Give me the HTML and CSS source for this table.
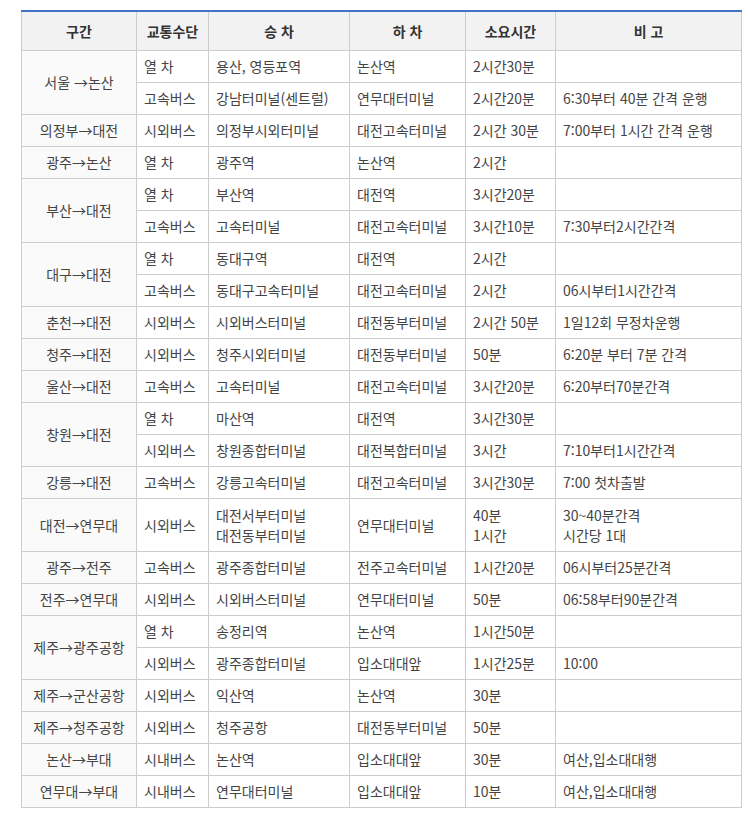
FILE: index.html
```html
<!DOCTYPE html>
<html lang="ko">
<head>
<meta charset="utf-8">
<link rel="stylesheet" href="styles.css">
</head>
<body>
<div class="wrap">
<table class="route">
<colgroup>
<col class="c1"><col class="c2"><col class="c3"><col class="c4"><col class="c5"><col class="c6">
</colgroup>
<thead>
<tr><th>구간</th><th>교통수단</th><th>승 차</th><th>하 차</th><th>소요시간</th><th>비 고</th></tr>
</thead>
<tbody>
<tr><td class="sec" rowspan="2">서울 →논산</td><td>열 차</td><td>용산, 영등포역</td><td>논산역</td><td>2시간30분</td><td></td></tr>
<tr><td>고속버스</td><td>강남터미널(센트럴)</td><td>연무대터미널</td><td>2시간20분</td><td>6:30부터 40분 간격 운행</td></tr>
<tr><td class="sec">의정부→대전</td><td>시외버스</td><td>의정부시외터미널</td><td>대전고속터미널</td><td>2시간 30분</td><td>7:00부터 1시간 간격 운행</td></tr>
<tr><td class="sec">광주→논산</td><td>열 차</td><td>광주역</td><td>논산역</td><td>2시간</td><td></td></tr>
<tr><td class="sec" rowspan="2">부산→대전</td><td>열 차</td><td>부산역</td><td>대전역</td><td>3시간20분</td><td></td></tr>
<tr><td>고속버스</td><td>고속터미널</td><td>대전고속터미널</td><td>3시간10분</td><td>7:30부터2시간간격</td></tr>
<tr><td class="sec" rowspan="2">대구→대전</td><td>열 차</td><td>동대구역</td><td>대전역</td><td>2시간</td><td></td></tr>
<tr><td>고속버스</td><td>동대구고속터미널</td><td>대전고속터미널</td><td>2시간</td><td>06시부터1시간간격</td></tr>
<tr><td class="sec">춘천→대전</td><td>시외버스</td><td>시외버스터미널</td><td>대전동부터미널</td><td>2시간 50분</td><td>1일12회 무정차운행</td></tr>
<tr><td class="sec">청주→대전</td><td>시외버스</td><td>청주시외터미널</td><td>대전동부터미널</td><td>50분</td><td>6:20분 부터 7분 간격</td></tr>
<tr><td class="sec">울산→대전</td><td>고속버스</td><td>고속터미널</td><td>대전고속터미널</td><td>3시간20분</td><td>6:20부터70분간격</td></tr>
<tr><td class="sec" rowspan="2">창원→대전</td><td>열 차</td><td>마산역</td><td>대전역</td><td>3시간30분</td><td></td></tr>
<tr><td>시외버스</td><td>창원종합터미널</td><td>대전복합터미널</td><td>3시간</td><td>7:10부터1시간간격</td></tr>
<tr><td class="sec">강릉→대전</td><td>고속버스</td><td>강릉고속터미널</td><td>대전고속터미널</td><td>3시간30분</td><td>7:00 첫차출발</td></tr>
<tr class="tall"><td class="sec">대전→연무대</td><td>시외버스</td><td>대전서부터미널<br>대전동부터미널</td><td>연무대터미널</td><td>40분<br>1시간</td><td>30~40분간격<br>시간당 1대</td></tr>
<tr><td class="sec">광주→전주</td><td>고속버스</td><td>광주종합터미널</td><td>전주고속터미널</td><td>1시간20분</td><td>06시부터25분간격</td></tr>
<tr><td class="sec">전주→연무대</td><td>시외버스</td><td>시외버스터미널</td><td>연무대터미널</td><td>50분</td><td>06:58부터90분간격</td></tr>
<tr><td class="sec" rowspan="2">제주→광주공항</td><td>열 차</td><td>송정리역</td><td>논산역</td><td>1시간50분</td><td></td></tr>
<tr><td>시외버스</td><td>광주종합터미널</td><td>입소대대앞</td><td>1시간25분</td><td>10:00</td></tr>
<tr><td class="sec">제주→군산공항</td><td>시외버스</td><td>익산역</td><td>논산역</td><td>30분</td><td></td></tr>
<tr><td class="sec">제주→청주공항</td><td>시외버스</td><td>청주공항</td><td>대전동부터미널</td><td>50분</td><td></td></tr>
<tr><td class="sec">논산→부대</td><td>시내버스</td><td>논산역</td><td>입소대대앞</td><td>30분</td><td>여산,입소대대행</td></tr>
<tr><td class="sec">연무대→부대</td><td>시내버스</td><td>연무대터미널</td><td>입소대대앞</td><td>10분</td><td>여산,입소대대행</td></tr>
</tbody>
</table>
</div>
</body>
</html>
```

FILE: styles.css
```css
html, body {
  margin: 0;
  padding: 0;
  background: #fff;
}
.wrap {
  padding: 10px 0 0 21px;
}
.route {
  border-collapse: collapse;
  table-layout: fixed;
  width: 720px;
  font-family: "Noto Sans CJK KR", "Noto Sans", sans-serif;
  font-size: 14px;
  color: #444;
  border-top: 2px solid #4472c4;
}
.c1 { width: 115px; }
.c2 { width: 72px; }
.c3 { width: 141px; }
.c4 { width: 116px; }
.c5 { width: 90px; }
.c6 { width: 186px; }
.route th,
.route td {
  border: 1px solid #cccccc;
  line-height: 20.5px;
  text-align: left;
  vertical-align: middle;
  white-space: nowrap;
  overflow: hidden;
}
.route thead th {
  border-top: 2px solid #4472c4;
  background: #f2f2f2;
  color: #333;
  font-weight: bold;
  text-align: center;
  height: 38px;
  padding: 0 4px;
}
.route td {
  height: 32px;
  padding: 0 0 0 7px;
  box-sizing: border-box;
}
.route tr.tall td {
  height: 53px;
}
.route td.sec {
  background: #fafafa;
  text-align: center;
  padding: 0;
}
```
